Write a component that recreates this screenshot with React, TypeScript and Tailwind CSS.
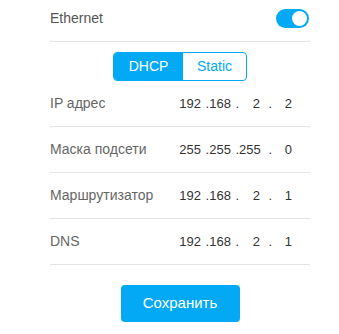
import { useState } from "react";

const rows = [
  { label: "IP адрес", ip: ["192", "168", "2", "2"] },
  { label: "Маска подсети", ip: ["255", "255", "255", "0"] },
  { label: "Маршрутизатор", ip: ["192", "168", "2", "1"] },
  { label: "DNS", ip: ["192", "168", "2", "1"] },
];

function IpField({ parts }: { parts: string[] }) {
  return (
    <div className="flex items-center text-[13px] text-[#333]">
      <span className="w-[22px] text-right">{parts[0]}</span>
      <span className="w-[8px] text-right">.</span>
      <span className="w-[22px] text-right">{parts[1]}</span>
      <span className="w-[8px] text-right">.</span>
      <span className="w-[21px] text-right">{parts[2]}</span>
      <span className="w-[12px] text-right">.</span>
      <span className="w-[20px] text-right">{parts[3]}</span>
    </div>
  );
}

export default function App() {
  const [on, setOn] = useState(true);
  const [mode, setMode] = useState<"dhcp" | "static">("dhcp");

  return (
    <div
      className="w-[339px] h-[334px] bg-white"
      style={{ fontFamily: '"Liberation Sans", Arial, sans-serif' }}
    >
      <div className="mx-[50px] w-[260px] flex flex-col">
        {/* Ethernet toggle */}
        <div className="h-[42px] pb-[5px] border-b border-[#e3e3e3] flex items-center justify-between">
          <span className="text-[14px] text-[#555]">Ethernet</span>
          <button
            onClick={() => setOn(!on)}
            className={`w-[33px] h-[19px] rounded-full flex items-center px-[2px] mr-[1px] ${
              on ? "bg-[#03a9f4] justify-end" : "bg-[#ccc] justify-start"
            }`}
          >
            <span className="w-[15px] h-[15px] rounded-full bg-white" />
          </button>
        </div>

        {/* DHCP / Static */}
        <div className="mt-[10px] self-center flex h-[29px] w-[134px] border border-[#03a9f4] rounded-[4px] overflow-hidden text-[14px]">
          <button
            onClick={() => setMode("dhcp")}
            className={`w-[69px] ${mode === "dhcp" ? "bg-[#03a9f4] text-white" : "text-[#03a9f4]"}`}
          >
            DHCP
          </button>
          <button
            onClick={() => setMode("static")}
            className={`flex-1 ${mode === "static" ? "bg-[#03a9f4] text-white" : "text-[#03a9f4]"}`}
          >
            Static
          </button>
        </div>

        {/* Address rows */}
        {rows.map((r) => (
          <div key={r.label} className="h-[46px] border-b border-[#e3e3e3] flex items-center">
            <span className="w-[129px] text-[14px] text-[#666]">{r.label}</span>
            <IpField parts={r.ip} />
          </div>
        ))}

        <button className="mt-[20px] self-center w-[119px] h-[37px] rounded-[4px] bg-[#03a9f4] text-white text-[15px]">
          Сохранить
        </button>
      </div>
    </div>
  );
}
